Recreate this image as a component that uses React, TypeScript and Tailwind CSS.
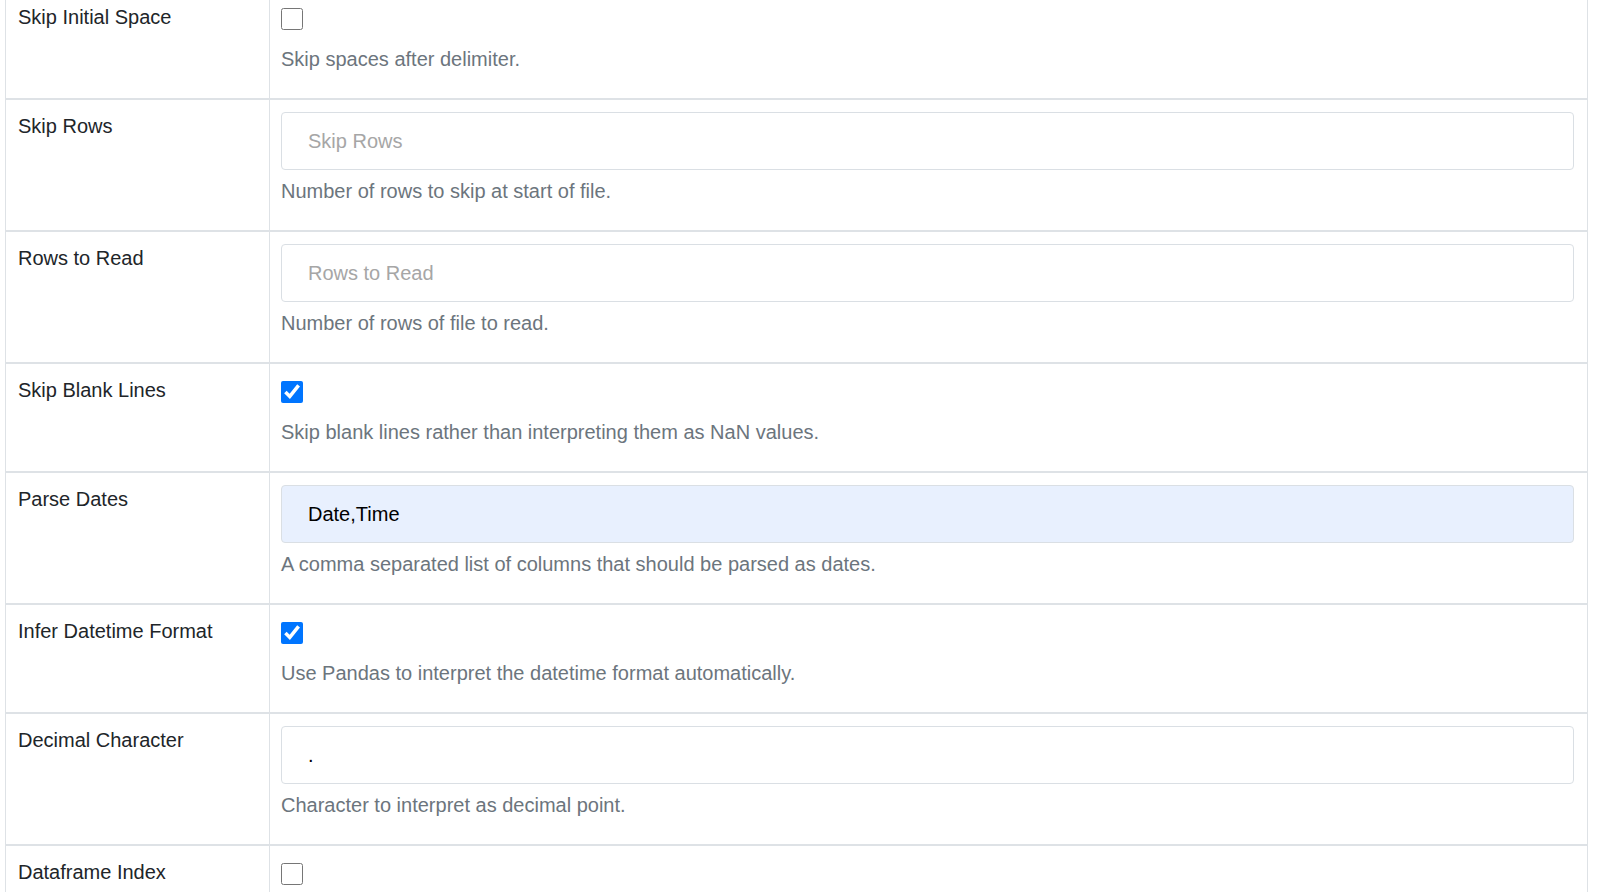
type Field = {
  label: string;
  help: string;
  kind: "check" | "text";
  checked?: boolean;
  placeholder?: string;
  value?: string;
  filled?: boolean;
};

const fields: Field[] = [
  { label: "Skip Initial Space", kind: "check", help: "Skip spaces after delimiter." },
  { label: "Skip Rows", kind: "text", placeholder: "Skip Rows", help: "Number of rows to skip at start of file." },
  { label: "Rows to Read", kind: "text", placeholder: "Rows to Read", help: "Number of rows of file to read." },
  {
    label: "Skip Blank Lines",
    kind: "check",
    checked: true,
    help: "Skip blank lines rather than interpreting them as NaN values.",
  },
  {
    label: "Parse Dates",
    kind: "text",
    placeholder: "Parse Dates",
    value: "Date,Time",
    filled: true,
    help: "A comma separated list of columns that should be parsed as dates.",
  },
  {
    label: "Infer Datetime Format",
    kind: "check",
    checked: true,
    help: "Use Pandas to interpret the datetime format automatically.",
  },
  {
    label: "Decimal Character",
    kind: "text",
    placeholder: "Decimal Character",
    value: ".",
    help: "Character to interpret as decimal point.",
  },
  { label: "Dataframe Index", kind: "check", help: "Column to use as the row labels of the DataFrame." },
];

const Row = ({ field }: { field: Field }) => {
  return (
    <div className="flex border-t-2 border-[#dee2e6]">
      <div className="w-[264px] shrink-0 border-r border-[#dee2e6] pl-[12px] pt-[11px] text-[#212529]">
        {field.label}
      </div>
      <div className="flex-1 pl-[11px] pr-[13px] pt-[12px] pb-[24px]">
        {field.kind === "check" ? (
          <input
            type="checkbox"
            defaultChecked={field.checked}
            className="block w-[22px] h-[22px] m-0 mt-[5px] accent-[#0075ff]"
          />
        ) : (
          <input
            type="text"
            placeholder={field.placeholder}
            defaultValue={field.value}
            className={
              "block w-full h-[58px] px-[26px] rounded-[4px] border border-[#dadfe4] text-[20px] text-black outline-none placeholder:text-[#a6a6a6] " +
              (field.filled ? "bg-[#e8f0fe]" : "bg-white")
            }
          />
        )}
        <div className={"text-[#6c757d] " + (field.kind === "check" ? "mt-[14px]" : "mt-[6px]")}>
          {field.help}
        </div>
      </div>
    </div>
  );
};

export default function App() {
  return (
    <div className="h-[892px] overflow-hidden bg-white font-['Liberation_Sans',Arial,sans-serif] text-[20px] leading-[30px]">
      <div className="-mt-[11px] ml-[5px] mr-[12px] border-x border-[#dee2e6]">
        {fields.map((field) => (
          <Row key={field.label} field={field} />
        ))}
      </div>
    </div>
  );
}
